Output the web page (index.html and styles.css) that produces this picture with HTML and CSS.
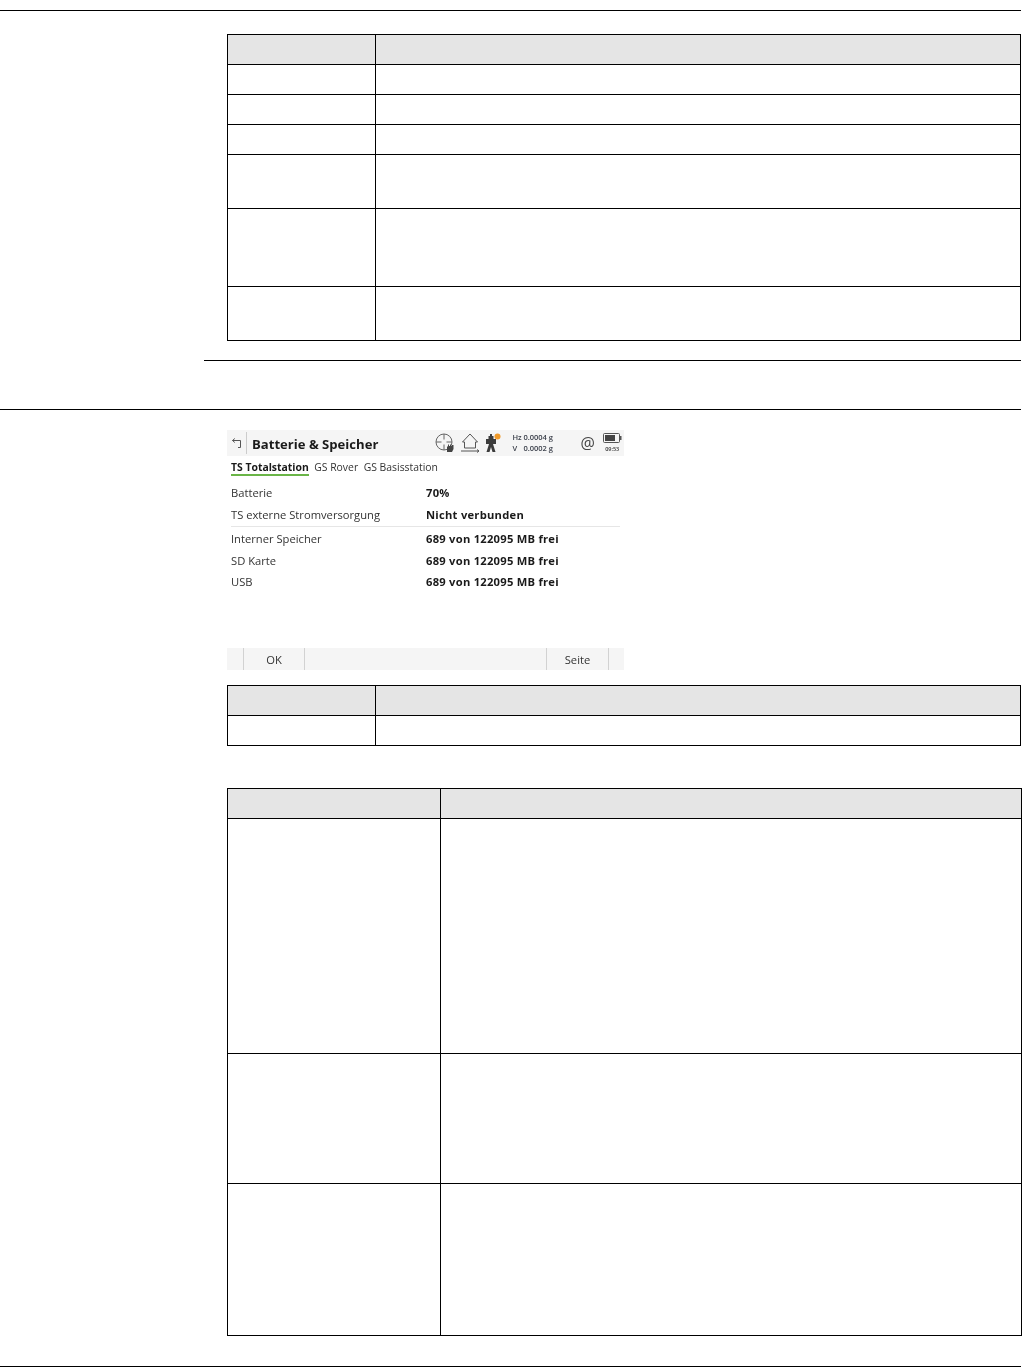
FILE: index.html
```html
<!DOCTYPE html>
<html lang="de">
<head>
<meta charset="utf-8">
<title>Batterie &amp; Speicher</title>
<link rel="stylesheet" href="styles.css">
</head>
<body>
<div class="page">
  <hr class="rule rule-top">
  <table class="grid grid-a">
    <tr class="head h30"><td class="c1"></td><td></td></tr>
    <tr class="h30"><td></td><td></td></tr>
    <tr class="h30"><td></td><td></td></tr>
    <tr class="h30"><td></td><td></td></tr>
    <tr class="h54"><td></td><td></td></tr>
    <tr class="h78"><td></td><td></td></tr>
    <tr class="h54"><td></td><td></td></tr>
  </table>
  <hr class="rule rule-end">
  <hr class="rule rule-section">

  <section class="screen">
    <header class="bar">
      <svg class="back" viewBox="0 0 12 12" width="12" height="12" aria-hidden="true"><path d="M1.500 3.500H9.500V10.500H7M1.500 3.500L3.800 1.500M1.500 3.500L3.800 5.500" fill="none" stroke="#555" stroke-width="1"/></svg>
      <span class="bar-sep"></span>
      <h1 class="title">Batterie &amp; Speicher</h1>
      <div class="status">
        <svg class="ic-target" viewBox="0 0 20 20" width="20" height="20" aria-hidden="true"><circle cx="9" cy="9" r="8" fill="none" stroke="#666"/><path d="M9 1V6.500M9 11.500V17M1 9H6.500M11.500 9H17" stroke="#666"/><path d="M12 19V13.500H13V11.500H14V13H15V11.500H16V13H17V12H18.500V16L17 19Z" fill="#444"/></svg>
        <svg class="ic-home" viewBox="0 0 20 20" width="20" height="20" aria-hidden="true"><path d="M1.500 9L9 1L16.500 9H14.500V15H3.500V9Z" fill="none" stroke="#555"/><path d="M0 18H18M16 16.500L18 18L16 19.500" fill="none" stroke="#555"/></svg>
        <svg class="ic-station" viewBox="0 0 20 20" width="20" height="20" aria-hidden="true"><path d="M2 6H4.500V3H6V1H8V3H9.500V6H12V11H9L11.500 19H8.500L7 14L5.500 19H2.500L5 11H2Z" fill="#3c3c3c"/><circle cx="13.500" cy="3.500" r="3" fill="#f09a2a"/></svg>
        <div class="angles">
          <div class="angle"><span class="angle-k">Hz</span><span>0.0004 g</span></div>
          <div class="angle"><span class="angle-k">V</span><span>0.0002 g</span></div>
        </div>
        <span class="at">@</span>
        <div class="power">
          <svg viewBox="0 0 19 10" width="19" height="10" aria-hidden="true"><rect x="0.500" y="0.500" width="16" height="9" rx="1" fill="none" stroke="#555"/><rect x="2" y="2" width="10" height="6" fill="#444"/><rect x="17" y="3" width="1.500" height="4" fill="#555"/></svg>
          <span class="time">09:53</span>
        </div>
      </div>
    </header>
    <nav class="tabs">
      <span class="tab tab-on">TS Totalstation</span>
      <span class="tab">GS Rover</span>
      <span class="tab">GS Basisstation</span>
    </nav>
    <div class="rows rows-first">
      <div class="row"><span class="key">Batterie</span><span class="val">70%</span></div>
      <div class="row"><span class="key">TS externe Stromversorgung</span><span class="val">Nicht verbunden</span></div>
    </div>
    <div class="rows rows-second">
      <div class="row"><span class="key">Interner Speicher</span><span class="val">689 von 122095 MB frei</span></div>
      <div class="row"><span class="key">SD Karte</span><span class="val">689 von 122095 MB frei</span></div>
      <div class="row"><span class="key">USB</span><span class="val">689 von 122095 MB frei</span></div>
    </div>
    <footer class="softkeys">
      <span class="key-pad"></span>
      <span class="softkey key-ok">OK</span>
      <span class="softkey key-blank"></span>
      <span class="softkey key-page">Seite</span>
    </footer>
  </section>

  <table class="grid grid-b">
    <tr class="head h30"><td class="c1"></td><td></td></tr>
    <tr class="h30"><td></td><td></td></tr>
  </table>
  <table class="grid grid-c">
    <tr class="head h30"><td class="c1w"></td><td></td></tr>
    <tr class="h235"><td></td><td></td></tr>
    <tr class="h130"><td></td><td></td></tr>
    <tr class="h152"><td></td><td></td></tr>
  </table>
  <hr class="rule rule-bottom">
</div>
</body>
</html>
```

FILE: styles.css
```css
* { box-sizing: border-box; }
html, body { margin: 0; padding: 0; background: #fff; }
.page {
  width: 1023px;
  height: 1367px;
  overflow: hidden;
  font-family: "Open Sans", "Noto Sans", sans-serif;
  color: #222;
}
.rule { display: block; margin: 0; border: 0; height: 1px; background: #000; }
.rule-top { width: 1021px; margin-top: 10px; }
.rule-end { width: 817px; margin: 19px 0 0 204px; }
.rule-section { width: 1021px; margin-top: 48px; }
.rule-bottom { width: 1021px; margin-top: 30px; }

.grid {
  border-collapse: collapse;
  table-layout: fixed;
  margin-left: 227px;
  background: #fff;
}
.grid td { border: 1px solid #000; padding: 0; }
.head td { background: #e5e5e5; }
.grid-a { width: 794px; margin-top: 23px; }
.grid-b { width: 794px; margin-top: 15px; }
.grid-c { width: 795px; margin-top: 42px; }
.c1 { width: 148px; }
.c1w { width: 213px; }
.h30 { height: 30px; }
.h54 { height: 54px; }
.h78 { height: 78px; }
.h130 { height: 130px; }
.h152 { height: 152px; }
.h235 { height: 235px; }

.screen {
  width: 397px;
  margin: 20px 0 0 227px;
  font-size: 11.200px;
  color: #333;
  filter: blur(0.3px);
}
.bar {
  height: 26px;
  background: #f5f5f5;
  display: flex;
  align-items: center;
  padding-left: 4px;
}
.back { flex: none; }
.bar-sep { width: 1px; height: 22px; background: #ccc; margin-left: 3px; }
.title {
  margin: 0 0 0 5px;
  font-size: 13.100px;
  font-weight: 700;
  line-height: 26px;
  padding-top: 1px;
  color: #1a1a1a;
  white-space: nowrap;
}
.status { display: flex; align-items: center; margin-left: 57px; }
.ic-home { margin-left: 6px; }
.ic-station { margin-left: 3px; }
.angles { margin-left: 8px; width: 68px; font-size: 7.500px; font-weight: 600; line-height: 11px; color: #3a3f4a; }
.angle { display: flex; }
.angle-k { width: 11px; }
.at { font-size: 16px; line-height: 20px; color: #444; }
.power { margin-left: 8px; display: flex; flex-direction: column; align-items: center; width: 19px; }
.time { font-size: 5.500px; font-weight: 600; line-height: 8px; margin-top: 2px; color: #333; }

.tabs { display: flex; gap: 5.500px; margin: 4px 0 0 4px; height: 15px; line-height: 14px; white-space: nowrap; }
.tab { font-size: 10.400px; }
.tab-on { font-weight: 700; color: #1a1a1a; border-bottom: 2px solid #6ab547; height: 16px; }

.rows-first { margin: 7px 0 0 4px; padding-bottom: 1px; border-bottom: 1px solid #e6e6e6; width: 389px; }
.rows-second { margin: 1px 0 0 4px; width: 389px; }
.row { display: flex; height: 21.500px; line-height: 21.500px; white-space: nowrap; }
.key { width: 195px; flex: none; }
.val { font-weight: 700; color: #1a1a1a; letter-spacing: 0.250px; }

.softkeys {
  margin-top: 55px;
  height: 22px;
  background: #f5f5f5;
  display: flex;
  line-height: 23px;
  text-align: center;
}
.key-pad { width: 17px; border-right: 1px solid #d2d2d2; }
.softkey { border-right: 1px solid #d2d2d2; }
.key-ok { width: 61px; }
.key-blank { width: 242px; }
.key-page { width: 62px; }
```
